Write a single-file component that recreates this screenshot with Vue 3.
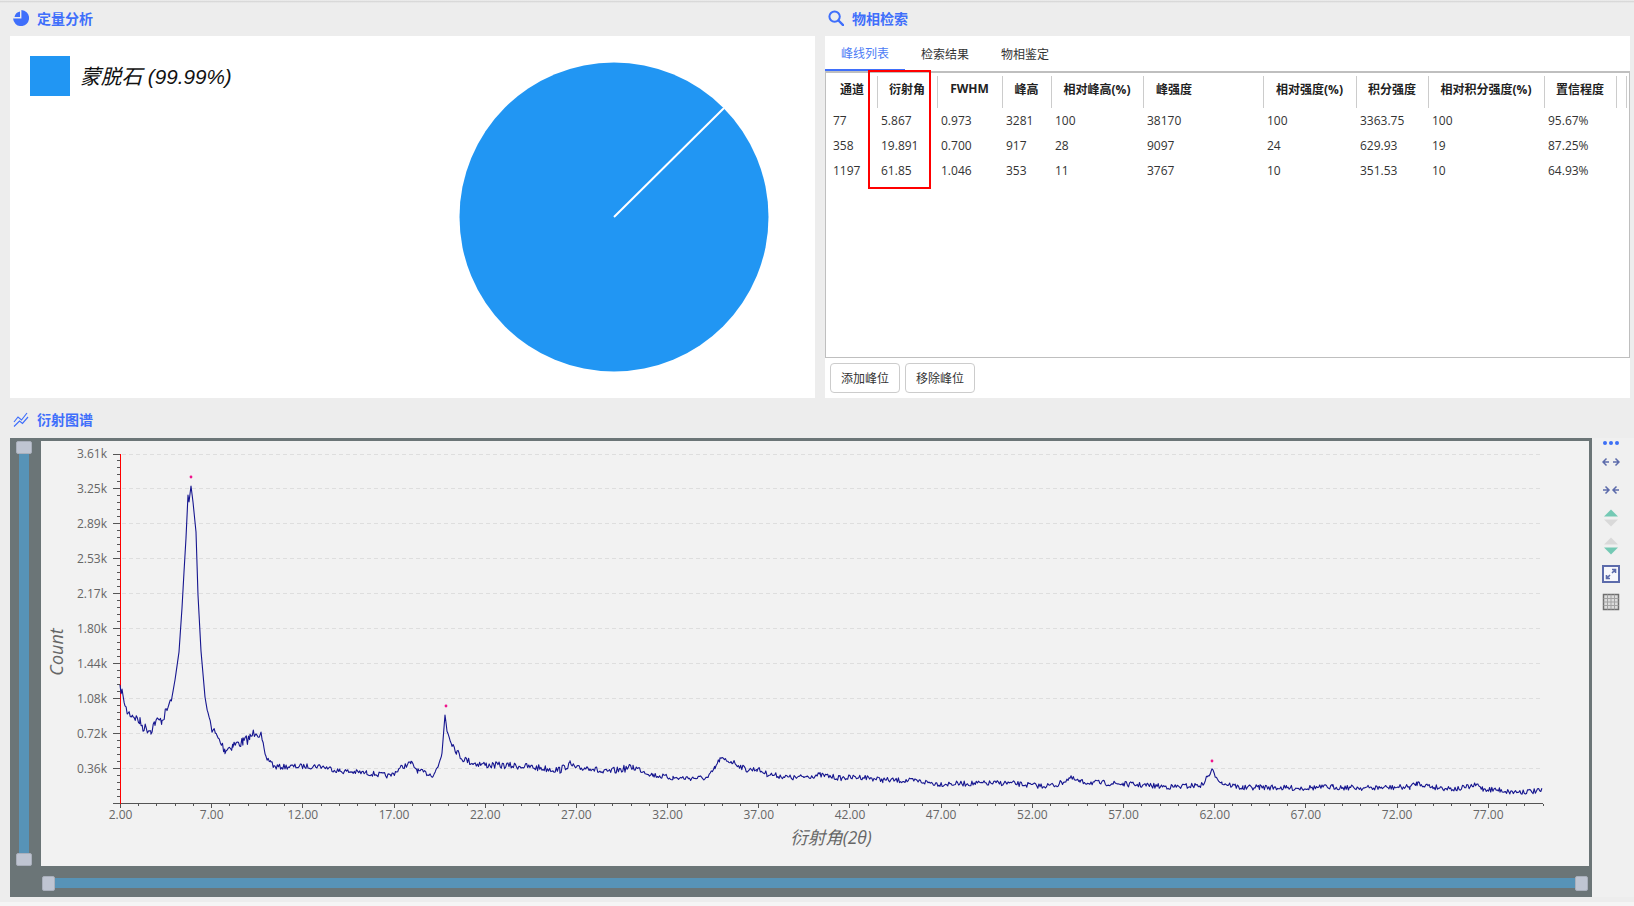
<script setup>
const tabs = ["峰线列表", "检索结果", "物相鉴定"]

const columns = [
  { title: "通道", width: 52, key: "ch" },
  { title: "衍射角", width: 60, key: "angle" },
  { title: "FWHM", width: 65, key: "fwhm" },
  { title: "峰高", width: 49, key: "height" },
  { title: "相对峰高(%)", width: 92, key: "relHeight" },
  { title: "峰强度", width: 120, key: "intensity", shifted: true },
  { title: "相对强度(%)", width: 93, key: "relIntensity" },
  { title: "积分强度", width: 72, key: "area" },
  { title: "相对积分强度(%)", width: 116, key: "relArea" },
  { title: "置信程度", width: 72, key: "confidence" }
]

const peaks = [
  { ch: 77, angle: "5.867", fwhm: "0.973", height: 3281, relHeight: 100, intensity: 38170, relIntensity: 100, area: "3363.75", relArea: 100, confidence: "95.67%" },
  { ch: 358, angle: "19.891", fwhm: "0.700", height: 917, relHeight: 28, intensity: 9097, relIntensity: 24, area: "629.93", relArea: 19, confidence: "87.25%" },
  { ch: 1197, angle: "61.85", fwhm: "1.046", height: 353, relHeight: 11, intensity: 3767, relIntensity: 10, area: "351.53", relArea: 10, confidence: "64.93%" }
]

// chart coordinates are relative to the plot area's top left corner
const axisX = 79.5
const axisRight = 1502
const axisTop = 13
const axisBottom = 362.5
const yStep = (axisBottom - axisTop) / 10
const xStep = (axisRight - axisX) / 78

const yLabels = ["3.61k", "3.25k", "2.89k", "2.53k", "2.17k", "1.80k", "1.44k", "1.08k", "0.72k", "0.36k"]
const yMajor = yLabels.map((text, i) => ({ text, y: axisTop + i * yStep }))
const yMinor = []
for (let i = 0; i < 50; i++) {
  if (i % 5) yMinor.push(axisTop + i * yStep / 5)
}

const xMajor = []
const xMinor = []
for (let v = 2; v <= 80; v++) {
  const x = axisX + (v - 2) * xStep
  if ((v - 2) % 5 === 0 && v < 80) xMajor.push({ text: v.toFixed(2), x })
  else xMinor.push(x)
}

// anchors read off the reference, in page pixels
const anchors = [
  [120, 690], [122, 689], [125, 708], [128, 713], [133, 715], [140, 722], [143, 727], [151, 730],
  [155, 722], [162, 720], [167, 710], [172, 697], [175, 680], [179, 652], [182, 608], [184, 572],
  [186, 538], [188, 495], [189, 502], [191, 486], [193, 502], [196, 532], [198, 595], [201, 651],
  [205, 697], [208, 715], [212, 728], [217, 737], [225, 750], [233, 745], [243, 742], [250, 738],
  [256, 730], [261, 737], [264, 748], [266, 759], [271, 761], [274, 767], [320, 766], [340, 771],
  [367, 773], [390, 776], [402, 767], [411, 763], [418, 771], [433, 775], [438, 767], [442, 753],
  [445, 715], [447, 730], [452, 743], [457, 752], [462, 758], [473, 763], [487, 765], [520, 766],
  [560, 770], [570, 764], [577, 769], [590, 767], [603, 773], [633, 767], [653, 775], [673, 778],
  [708, 778], [715, 768], [720, 759], [733, 762], [747, 770], [757, 769], [767, 774], [793, 778],
  [820, 775], [840, 778], [863, 777], [883, 780], [917, 781], [940, 784], [1007, 783], [1040, 786],
  [1057, 785], [1070, 778], [1080, 782], [1123, 784], [1173, 787], [1202, 785], [1208, 776], [1212, 771],
  [1222, 783], [1243, 788], [1260, 787], [1287, 788], [1300, 788], [1333, 787], [1367, 788], [1410, 787],
  [1417, 783], [1433, 787], [1457, 789], [1478, 785], [1483, 789], [1500, 790], [1510, 792], [1542, 791]
]

let seed = 7
function rand() {
  seed = (seed * 16807) % 2147483647
  return seed / 2147483647 - 0.5
}

function noiseAt(x, slope) {
  if (slope > 4) return 0
  // the low angle end is a lot noisier than the tail
  let size = 5.4
  if (x < 170 || (x > 208 && x < 262)) size = 10
  else if (x > 445 && x < 640) size = 7
  return rand() * size
}

function buildCurve() {
  const pts = []
  for (let i = 0; i < anchors.length - 1; i++) {
    const [x0, y0] = anchors[i]
    const [x1, y1] = anchors[i + 1]
    const slope = Math.abs((y1 - y0) / (x1 - x0))
    for (let x = x0; x < x1; x += 1.1) {
      const t = (x - x0) / (x1 - x0)
      const y = y0 + (y1 - y0) * t + noiseAt(x, slope)
      pts.push(`${(x - 41).toFixed(1)},${(y - 441).toFixed(1)}`)
    }
  }
  return "M" + pts.join("L")
}

const curve = buildCurve()

const markers = [
  { x: 150, y: 36 },
  { x: 405, y: 265 },
  { x: 1171, y: 320 }
]
</script>

<template>
  <div class="page">
    <div class="top-shadow"></div>

    <div class="top-row">
      <section class="panel">
        <header class="panel-title">
          <svg class="title-icon" viewBox="0 0 16 16">
            <path d="M7 1.500A6.800 6.800 0 0 0 1.500 7H7z" fill="#3f6ffb" />
            <path d="M8.400 .1A8 8 0 1 1 .1 8.400h8.300z" fill="#3f6ffb" />
          </svg>
          <span>定量分析</span>
        </header>
        <div class="panel-body quant-body">
          <div class="legend">
            <span class="legend-swatch"></span>
            <span class="legend-text">蒙脱石 (99.99%)</span>
          </div>
          <svg class="pie" viewBox="0 0 310 310">
            <circle cx="155" cy="155" r="154.5" fill="#2196f3" />
            <line x1="155" y1="155" x2="265" y2="46" stroke="#fff" stroke-width="2" />
          </svg>
        </div>
      </section>

      <section class="panel">
        <header class="panel-title">
          <svg class="title-icon" viewBox="0 0 16 16">
            <circle cx="6.600" cy="6.600" r="5.200" fill="none" stroke="#3f6ffb" stroke-width="2" />
            <path d="M10.500 10.500l4.600 4.600" stroke="#3f6ffb" stroke-width="2.400" stroke-linecap="round" />
          </svg>
          <span>物相检索</span>
        </header>
        <div class="panel-body search-body">
          <div class="tabs">
            <div
              class="tab"
              v-for="(tab, i) in tabs"
              :key="tab"
              :class="{ active: i === 0 }"
            >
              {{ tab }}
            </div>
          </div>

          <div class="table-box">
            <table class="peak-table">
              <colgroup>
                <col v-for="col in columns" :key="col.key" :style="{ width: col.width + 'px' }" />
                <col class="col-stub" />
                <col />
              </colgroup>
              <thead>
                <tr>
                  <th
                    v-for="col in columns"
                    :key="col.key"
                    :class="{ shifted: col.shifted }"
                  >
                    {{ col.title }}
                  </th>
                  <th></th>
                  <th class="last"></th>
                </tr>
              </thead>
              <tbody>
                <tr v-for="peak in peaks" :key="peak.ch">
                  <td v-for="col in columns" :key="col.key">{{ peak[col.key] }}</td>
                  <td></td>
                  <td></td>
                </tr>
              </tbody>
            </table>
            <div class="highlight"></div>
          </div>

          <div class="actions">
            <button type="button" class="action">添加峰位</button>
            <button type="button" class="action">移除峰位</button>
          </div>
        </div>
      </section>
    </div>

    <header class="panel-title chart-title">
      <svg class="title-icon" viewBox="0 0 16 16">
        <path d="M1 11l4-5 3.500 3 5.500-7" fill="none" stroke="#3f6ffb" stroke-width="1.200" />
        <path d="M1 15.500l5.500-5.500 3 2.500 5.500-6.500" fill="none" stroke="#3f6ffb" stroke-width="1.200" />
      </svg>
      <span>衍射图谱</span>
    </header>

    <div class="chart-row">
      <div class="chart-frame">
        <div class="v-slider">
          <span class="handle"></span>
          <span class="v-track"></span>
          <span class="handle"></span>
        </div>

        <div class="plot">
          <svg class="plot-svg" viewBox="0 0 1548 425">
            <g stroke="#dedede" stroke-dasharray="4 3" shape-rendering="crispEdges">
              <line
                v-for="t in yMajor"
                :key="t.text"
                :x1="axisX + 1"
                :x2="axisRight"
                :y1="t.y"
                :y2="t.y"
              />
            </g>

            <g stroke="#555" shape-rendering="crispEdges">
              <line
                v-for="t in yMajor"
                :key="t.text"
                :x1="axisX - 8"
                :x2="axisX - 1"
                :y1="t.y"
                :y2="t.y"
              />
              <line
                v-for="y in yMinor"
                :key="y"
                :x1="axisX - 4"
                :x2="axisX - 1"
                :y1="y"
                :y2="y"
              />
              <line
                v-for="t in xMajor"
                :key="t.text"
                :x1="t.x"
                :x2="t.x"
                :y1="axisBottom"
                :y2="axisBottom + 4"
              />
              <line
                v-for="x in xMinor"
                :key="x"
                :x1="x"
                :x2="x"
                :y1="axisBottom"
                :y2="axisBottom + 2"
              />
            </g>
            <line :x1="axisX - 8" :x2="axisRight" :y1="axisBottom" :y2="axisBottom" stroke="#555" shape-rendering="crispEdges" />
            <line :x1="axisX" :x2="axisX" :y1="axisTop" :y2="axisBottom" stroke="#f00" shape-rendering="crispEdges" />

            <path :d="curve" fill="none" stroke="#16168f" stroke-width="1.100" stroke-linejoin="round" />

            <circle
              v-for="m in markers"
              :key="m.x"
              :cx="m.x"
              :cy="m.y"
              r="1.400"
              fill="#f0148c"
            />

            <text
              v-for="t in yMajor"
              :key="t.text"
              class="tick-text"
              text-anchor="end"
              x="66"
              :y="t.y + 4"
            >{{ t.text }}</text>
            <text
              v-for="t in xMajor"
              :key="t.text"
              class="tick-text"
              text-anchor="middle"
              :x="t.x"
              :y="axisBottom + 15"
            >{{ t.text }}</text>

            <text class="axis-title count" text-anchor="middle" transform="translate(22 211) rotate(-90)">Count</text>
            <text class="axis-title" text-anchor="middle" x="790" y="403">衍射角(2θ)</text>
          </svg>
        </div>

        <div class="corner"></div>

        <div class="h-slider">
          <span class="handle small"></span>
          <span class="h-track"></span>
          <span class="handle small"></span>
        </div>
      </div>

      <aside class="tools">
        <svg class="tool-dots" viewBox="0 0 16 4">
          <circle cx="2" cy="2" r="2" fill="#3d6ff5" />
          <circle cx="8" cy="2" r="2" fill="#3d6ff5" />
          <circle cx="14" cy="2" r="2" fill="#3d6ff5" />
        </svg>
        <svg class="tool" viewBox="0 0 18 18">
          <path d="M1 9h6M4.500 5.500L1 9l3.500 3.500M17 9h-6M13.500 5.500L17 9l-3.500 3.500" fill="none" stroke="#5c6bab" stroke-width="1.500" />
        </svg>
        <svg class="tool" viewBox="0 0 18 18">
          <path d="M1 9h6M3.500 5.500L7 9l-3.500 3.500M17 9h-6M14.500 5.500L11 9l3.500 3.500" fill="none" stroke="#5c6bab" stroke-width="1.500" />
        </svg>
        <svg class="tool" viewBox="0 0 18 18">
          <path d="M2 7.500L9 .5l7 7z" fill="#74c9b4" />
          <path d="M2 10.500h14l-7 7z" fill="#d9d9d9" />
        </svg>
        <svg class="tool" viewBox="0 0 18 18">
          <path d="M2 7.500L9 .5l7 7z" fill="#d9d9d9" />
          <path d="M2 10.500h14l-7 7z" fill="#74c9b4" />
        </svg>
        <svg class="tool" viewBox="0 0 18 18">
          <rect x="1" y="1" width="16" height="16" fill="#f7f7fb" stroke="#5c6bab" stroke-width="2" />
          <path d="M4.500 13.500l3.500-3.500M4.500 10v3.500H8M13.500 4.500L10 8M10 4.500h3.500V8" fill="none" stroke="#5c6bab" stroke-width="1.600" />
        </svg>
        <svg class="tool" viewBox="0 0 18 18">
          <rect x="1.500" y="1.500" width="15" height="15" fill="#dcdcdc" stroke="#6f6f6f" stroke-width="1.500" />
          <path d="M1.500 5.500h15M1.500 9h15M1.500 12.500h15M5.500 1.500v15M9 1.500v15M12.500 1.500v15" stroke="#a3a3a3" stroke-width="1" />
        </svg>
      </aside>
    </div>

    <div class="page-foot"></div>
  </div>
</template>

<style scoped>
.page {
  width: 1634px;
  height: 906px;

  display: flex;
  flex-direction: column;

  overflow: hidden;

  background: #ededed;

  font-family: "Open Sans", "Noto Sans CJK SC", sans-serif;
  font-size: 12px;
  color: #333;
}

.top-shadow {
  height: 3px;

  background:
    linear-gradient(
      180deg,
      #f2f2f2,
      #d9d9d9 50%,
      #ededed
    );
}

.top-row {
  display: flex;
  gap: 10px;

  padding: 0 4px 0 10px;
}

.panel {
  width: 805px;
}

.panel-title {
  height: 33px;

  box-sizing: border-box;

  display: flex;
  align-items: center;

  gap: 8px;

  padding: 0 0 3px 3px;

  color: #3f6ffb;

  font-size: 14px;
  font-weight: 700;
}

.title-icon {
  width: 16px;
  height: 16px;

  flex-shrink: 0;
}

.panel-body {
  height: 362px;

  background: #fff;
}

/* QUANT */

.quant-body {
  display: flex;
  align-items: flex-start;
}

.legend {
  width: 429px;

  display: flex;
  align-items: center;

  gap: 10px;

  padding: 20px 0 0 20px;
}

.legend-swatch {
  width: 40px;
  height: 40px;

  background: #2196f3;
}

.legend-text {
  margin-top: -2px;

  font-family: "Liberation Sans", "Noto Sans CJK SC", sans-serif;
  font-size: 20.7px;
  font-style: italic;
  color: #111;
}

.pie {
  width: 310px;
  height: 310px;

  margin-top: 26px;
}

/* SEARCH */

.search-body {
  display: flex;
  flex-direction: column;
}

.tabs {
  height: 35px;

  display: flex;
}

.tab {
  width: 80px;

  display: flex;
  align-items: center;
  justify-content: center;

  color: #333;
}

.tab.active {
  border-bottom: 2px solid #3f6ffb;

  color: #4d7cf5;
}

.table-box {
  position: relative;

  height: 284px;

  border: 1px solid #bfbfbf;
  border-top-width: 2px;
}

.peak-table {
  width: 100%;

  border-collapse: collapse;
  table-layout: fixed;
}

.col-stub {
  width: 10px;
}

.peak-table th {
  position: relative;

  padding: 0 2px 4px 0;

  color: #222;

  font-size: 12px;
  font-weight: 700;
  text-align: center;
}

.peak-table th:first-child {
  padding-left: 2px;
}

.peak-table thead tr {
  height: 35px;
}

.peak-table th::after {
  content: "";

  position: absolute;
  top: 3px;
  right: 0;
  bottom: 0;

  width: 1px;

  background: #ccc;
}

.peak-table th.last::after {
  display: none;
}

.peak-table th.shifted {
  padding-right: 60px;
}

.peak-table td {
  height: 25px;

  padding: 0 0 0 3px;

  color: #333;

  line-height: 25px;
  white-space: nowrap;
}

.peak-table td:first-child {
  padding-left: 7px;
}

.highlight {
  position: absolute;
  top: -3px;
  left: 42px;

  width: 63px;
  height: 119px;

  box-sizing: border-box;

  border: 2px solid #f00;

  pointer-events: none;
}

.actions {
  display: flex;
  gap: 5px;

  padding: 5px 0 0 5px;
}

.action {
  width: 70px;
  height: 30px;

  padding: 0;

  border: 1px solid #ccc;
  border-radius: 4px;

  background: #fff;

  font: inherit;
  color: #333;
}

/* CHART */

.chart-title {
  height: 40px;

  padding: 2px 0 0 13px;
}

.chart-row {
  display: flex;

  padding-left: 10px;
}

.chart-frame {
  width: 1582px;
  height: 459px;

  box-sizing: border-box;

  display: grid;
  grid-template-columns: 31px 1fr;
  grid-template-rows: 425px 1fr;

  padding: 3px 3px 0 0;

  background: #6b7577;
}

.v-slider {
  display: flex;
  flex-direction: column;
  align-items: center;

  padding-right: 3px;
}

.v-track {
  flex: 1;

  width: 10px;

  background: #5793b7;
}

.handle {
  width: 16px;
  height: 13px;

  box-sizing: border-box;

  flex-shrink: 0;

  border: 1px solid #a9afbb;
  border-radius: 2px;

  background: #bfc5d2;
}

.handle.small {
  width: 13px;
  height: 15px;
}

.plot {
  background: #f2f2f2;
}

.plot-svg {
  display: block;

  width: 1548px;
  height: 425px;
}

.tick-text {
  fill: #666;

  font-size: 12px;
}

.axis-title {
  fill: #666;

  font-size: 17.5px;
  font-style: italic;
}

.axis-title.count {
  font-size: 18px;
}

.h-slider {
  display: flex;
  align-items: center;

  padding: 3px 1px 0 1px;
}

.h-track {
  flex: 1;

  height: 10px;

  background: #5793b7;
}

.tools {
  flex: 1;

  display: flex;
  flex-direction: column;
  align-items: center;

  padding: 3px 4px 0 0;

  background: #f0f0f0;
}

.tool-dots {
  width: 16px;
  height: 4px;

  margin-bottom: 8px;
}

.tool {
  width: 18px;
  height: 18px;

  margin-bottom: 10px;
}

.page-foot {
  flex: 1;

  margin-top: 5px;

  background: #f5f5f5;
}
</style>

<style>
html,
body {
  margin: 0;
  background: #ededed;
}
</style>
